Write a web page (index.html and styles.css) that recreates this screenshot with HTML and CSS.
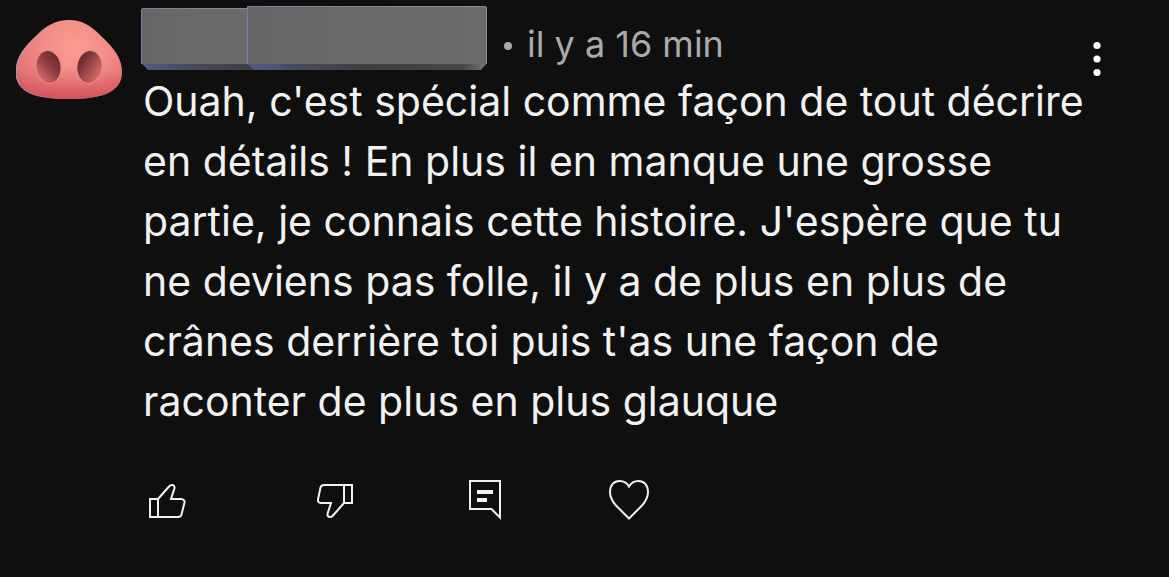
FILE: index.html
```html
<!DOCTYPE html>
<html lang="fr">
<head>
<meta charset="utf-8">
<meta name="viewport" content="width=device-width, initial-scale=1">
<title>Commentaire</title>
<link rel="stylesheet" href="styles.css">
</head>
<body>
<article class="comment">
  <svg class="avatar" viewBox="16 19 108 81" aria-hidden="true">
    <defs>
      <radialGradient id="skin" gradientUnits="userSpaceOnUse" cx="76" cy="48" r="66">
        <stop offset="0" stop-color="#fb9c8e"/><stop offset=".5" stop-color="#f28d86"/><stop offset="1" stop-color="#e0706f"/>
      </radialGradient>
      <linearGradient id="shade" x1="0" y1="0" x2="0" y2="1">
        <stop offset=".6" stop-color="#d8525a" stop-opacity="0"/><stop offset="1" stop-color="#cf4c57" stop-opacity=".85"/>
      </linearGradient>
      <linearGradient id="hole-left" x1=".9" y1=".2" x2=".1" y2=".85">
        <stop offset="0" stop-color="#6a2a2e"/><stop offset=".45" stop-color="#8f3f43"/><stop offset="1" stop-color="#d96b69"/>
      </linearGradient>
      <linearGradient id="hole-right" x1=".1" y1=".3" x2=".9" y2=".8">
        <stop offset="0" stop-color="#6a2a2e"/><stop offset=".45" stop-color="#9a474a"/><stop offset="1" stop-color="#d96b69"/>
      </linearGradient>
      <linearGradient id="rim" x1="0" y1="0" x2="1" y2="0">
        <stop offset="0" stop-color="#9a9ad8"/><stop offset=".35" stop-color="#b59ac8" stop-opacity="0"/>
      </linearGradient>
    </defs>
    <path fill="url(#skin)" d="M69 20C82 20 91 26 99 34C108 43 122 54 122 72C122 92 103 99 69 99S16 92 16 72C16 54 29 43 38 34C46 26 56 20 69 20Z"/>
    <path fill="url(#shade)" stroke="url(#rim)" d="M69 20C82 20 91 26 99 34C108 43 122 54 122 72C122 92 103 99 69 99S16 92 16 72C16 54 29 43 38 34C46 26 56 20 69 20Z"/>
    <ellipse cx="48.500" cy="67" rx="12.500" ry="16.500" transform="rotate(-8 48.500 67)" fill="url(#hole-left)" stroke="#f08a84"/>
    <ellipse cx="89.500" cy="67" rx="12.500" ry="16.500" transform="rotate(8 89.500 67)" fill="url(#hole-right)" stroke="#f08a84"/>
  </svg>
  <div class="main">
    <header class="meta">
      <svg class="redacted" viewBox="140 6 348 64" role="img" aria-label="Nom masqué">
        <defs>
          <linearGradient id="face" x1="0" y1="0" x2="1" y2="0">
            <stop offset="0" stop-color="#646567"/><stop offset=".4" stop-color="#69696b"/><stop offset="1" stop-color="#6b6b6d"/>
          </linearGradient>
          <linearGradient id="bevel" x1="0" y1="0" x2="1" y2="0">
            <stop offset="0" stop-color="#515c8c"/><stop offset=".22" stop-color="#46495c"/><stop offset=".5" stop-color="#3e3e40"/><stop offset=".9" stop-color="#474749"/><stop offset="1" stop-color="#77777a"/>
          </linearGradient>
          <linearGradient id="edge" x1="0" y1="0" x2="1" y2="0">
            <stop offset="0" stop-color="#7582ae"/><stop offset=".3" stop-color="#85868c"/><stop offset="1" stop-color="#8b8b8d"/>
          </linearGradient>
        </defs>
        <path fill="url(#bevel)" d="M141 63L148 70H373V63Z"/>
        <path fill="url(#face)" stroke="url(#edge)" d="M141.500 64V10Q141.500 8.500 143 8.500H248V64"/>
        <path fill="url(#bevel)" d="M247 63L254 70H481L487 63Z"/>
        <path fill="url(#face)" stroke="url(#edge)" d="M247.500 64V6.500H485.500Q486.500 6.500 486.500 8V64"/>
      </svg>
      <span class="dot"></span>
      <span class="time">il y a 16 min</span>
      <button class="menu" type="button" aria-label="Plus d'actions">
        <svg class="menu-icon" viewBox="0 0 24 40" aria-hidden="true"><g fill="#fff"><circle cx="12" cy="6.500" r="3.600"/><circle cx="12" cy="20" r="3.600"/><circle cx="12" cy="33.500" r="3.600"/></g></svg>
      </button>
    </header>
    <p class="text">Ouah, c'est spécial comme façon de tout décrire en détails ! En plus il en manque une grosse partie, je connais cette histoire. J'espère que tu ne deviens pas folle, il y a de plus en plus de crânes derrière toi puis t'as une façon de raconter de plus en plus glauque</p>
    <div class="actions">
      <button class="action" type="button" aria-label="J'aime">
        <svg class="icon" viewBox="143 476 48 48" aria-hidden="true"><path d="M150 499H158V517H150ZM158 499L169 486.500Q171 484.300 173.200 485.200Q175 486 174.400 488.500L171 499H181Q185 499.500 184.500 502.500L181.500 514.500Q180.800 517 178 517H158"/></svg>
      </button>
      <button class="action" type="button" aria-label="Je n'aime pas">
        <svg class="icon" viewBox="311 476 48 48" aria-hidden="true"><path d="M352 503H344V485H352ZM344 503L333 515.500Q331 517.700 328.800 516.800Q327 516 327.600 513.500L331 503H321Q317.500 502.500 318 499.500L320.500 487.500Q321.200 485 324 485H344"/></svg>
      </button>
      <button class="action" type="button" aria-label="Répondre">
        <svg class="icon" viewBox="461 476 48 48" aria-hidden="true"><path d="M470 481H500V517.500L491.500 509H470Z"/><path class="solid" d="M477 490H493V494H477ZM477 498H487V502H477Z"/></svg>
      </button>
      <button class="action" type="button" aria-label="Cœur">
        <svg class="icon" viewBox="605 476 48 48" aria-hidden="true"><path d="M629 518.500L616 505.500C612 501 610 497 610 492C610 485 614 481 619.500 481C624 481 627 483 629 486.500C631 483 634 481 638.500 481C644 481 648 485 648 492C648 497 646 501 642 505.500Z"/></svg>
      </button>
    </div>
  </div>
</article>
</body>
</html>
```
FILE: styles.css
```css
body {
  margin: 0;
  background: #0f0f0f;
  color: #f1f1f1;
  font-family: Inter, "Noto Sans", sans-serif;
}

.comment {
  display: flex;
  gap: 16px;
  padding: 6px 60px 48px 16px;
}

.avatar {
  flex: none;
  width: 108px;
  height: 81px;
  margin-top: 13px;
}

.main {
  flex: 1;
  min-width: 0;
}

.meta {
  display: flex;
  align-items: flex-start;
  height: 65px;
}

.redacted {
  flex: none;
  width: 348px;
  height: 64px;
}

.dot {
  flex: none;
  width: 8px;
  height: 8px;
  margin: 36px 15px 0 16px;
  border-radius: 50%;
  background: #aaa;
}

.time {
  padding-top: 16px;
  color: #aaa;
  font-size: 36px;
  line-height: 44px;
}

.menu,
.action {
  padding: 0;
  border: 0;
  background: none;
  cursor: pointer;
}

.menu {
  margin: 33px 0 0 auto;
}

.menu-icon {
  display: block;
  width: 24px;
  height: 40px;
}

.text {
  margin: 0;
  padding: 0 12px 0 3px;
  font-size: 41px;
  line-height: 60px;
}

.actions {
  display: grid;
  grid-template-columns: 168px 150px 144px 48px;
  padding: 45px 0 0 3px;
}

.action {
  width: 48px;
  height: 48px;
}

.icon {
  display: block;
  width: 48px;
  height: 48px;
  fill: none;
  stroke: #f1f1f1;
  stroke-width: 2;
}

.solid {
  fill: #f1f1f1;
  stroke: none;
}
```
